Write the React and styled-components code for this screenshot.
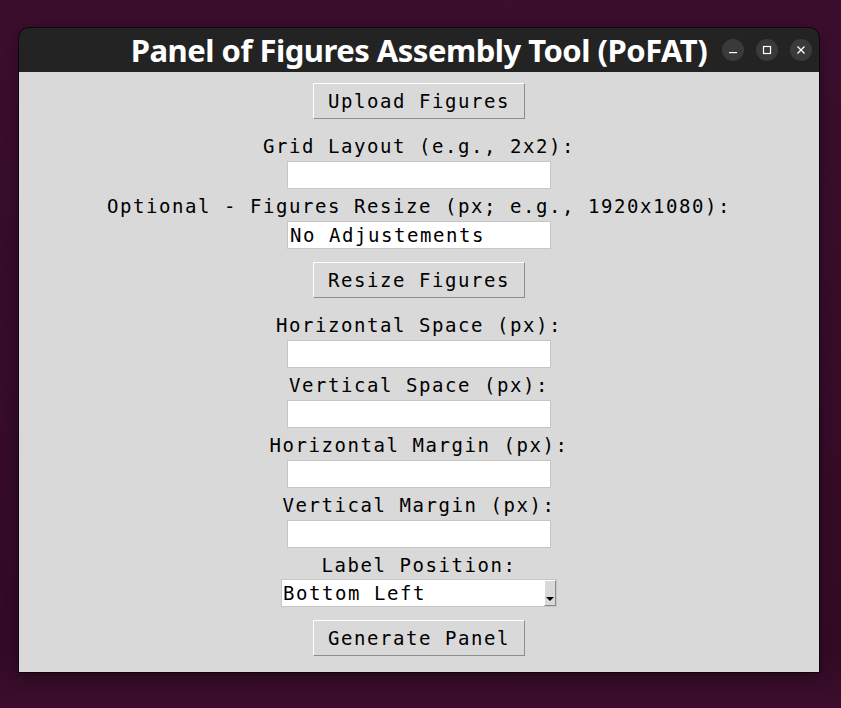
import styled, { createGlobalStyle } from "styled-components";

const GlobalStyle = createGlobalStyle`
  html, body {
    margin: 0;
    padding: 0;
    background: #390d2b;
  }
  * {
    box-sizing: border-box;
  }
`;

const Desktop = styled.div`
  width: 841px;
  height: 708px;
  padding: 28px 0 0 19px;
  background: linear-gradient(180deg, #3a0e2c 0%, #330a26 92%, #3a0e2c 100%);
`;

const Window = styled.div`
  width: 800px;
  border-radius: 10px 10px 0 0;
  overflow: hidden;
  box-shadow: 0 0 0 1px rgba(0, 0, 0, 0.6), 0 4px 14px rgba(0, 0, 0, 0.35);
`;

const TitleBar = styled.div`
  height: 44px;
  background: #232323;
  display: grid;
  grid-template-columns: 1fr auto 1fr;
  align-items: center;
`;

const Title = styled.div`
  grid-column: 2;
  color: #ffffff;
  font-family: "Noto Sans", "Open Sans", sans-serif;
  font-weight: 700;
  font-size: 31px;
  letter-spacing: -0.5px;
  line-height: 44px;
  white-space: nowrap;
`;

const Controls = styled.div`
  grid-column: 3;
  justify-self: end;
  display: flex;
  gap: 12px;
  padding-right: 7px;
`;

const Circle = styled.div`
  width: 22px;
  height: 22px;
  border-radius: 50%;
  background: #3a3a3a;
  display: flex;
  align-items: center;
  justify-content: center;
`;

const Content = styled.div`
  height: 600px;
  background: #d9d9d9;
  display: flex;
  flex-direction: column;
  align-items: center;
  font-family: "DejaVu Sans Mono", "Liberation Mono", monospace;
  font-size: 19px;
  letter-spacing: 1.56px;
  color: #000000;
`;

const Button = styled.div`
  width: 212px;
  height: 36px;
  margin-top: ${(p) => p.$top}px;
  margin-bottom: 10px;
  background: #d9d9d9;
  border-top: 1px solid #ffffff;
  border-left: 1px solid #ffffff;
  border-right: 1px solid #8c8c8c;
  border-bottom: 1px solid #8c8c8c;
  display: flex;
  align-items: center;
  justify-content: center;
  line-height: 1;
`;

const Label = styled.div`
  height: 32px;
  line-height: 34px;
  white-space: nowrap;
`;

const Entry = styled.div`
  width: 264px;
  height: 28px;
  background: #ffffff;
  border: 1px solid #c6c6c6;
  padding-left: 2px;
  display: flex;
  align-items: center;
  white-space: nowrap;
`;

const Combo = styled.div`
  width: 276px;
  height: 28px;
  margin-top: -1px;
  background: #ffffff;
  border: 1px solid #c6c6c6;
  display: flex;
`;

const ComboText = styled.div`
  flex: 1;
  padding-left: 1px;
  display: flex;
  align-items: center;
  white-space: nowrap;
`;

const ComboArrow = styled.div`
  width: 12px;
  background: #d9d9d9;
  border-top: 1px solid #ffffff;
  border-left: 1px solid #ffffff;
  border-right: 1px solid #8c8c8c;
  border-bottom: 1px solid #8c8c8c;
  display: flex;
  align-items: flex-end;
  justify-content: center;
  padding-bottom: 4px;
`;

const Triangle = styled.div`
  width: 0;
  height: 0;
  border-left: 4px solid transparent;
  border-right: 4px solid transparent;
  border-top: 4px solid #000000;
`;

function Field({ label, value }) {
  return (
    <>
      <Label>{label}</Label>
      <Entry>{value}</Entry>
    </>
  );
}

export default function App() {
  return (
    <>
      <GlobalStyle />
      <Desktop>
        <Window>
          <TitleBar>
            <Title>Panel of Figures Assembly Tool (PoFAT)</Title>
            <Controls>
              <Circle>
                <svg width="10" height="10" viewBox="0 0 10 10">
                  <rect x="1" y="7" width="8" height="1.2" fill="#fff" />
                </svg>
              </Circle>
              <Circle>
                <svg width="10" height="10" viewBox="0 0 10 10">
                  <rect x="1.5" y="1.5" width="7" height="7" fill="none" stroke="#fff" strokeWidth="1.2" />
                </svg>
              </Circle>
              <Circle>
                <svg width="10" height="10" viewBox="0 0 10 10">
                  <path d="M1.5 1.5 L8.5 8.5 M8.5 1.5 L1.5 8.5" stroke="#fff" strokeWidth="1.3" />
                </svg>
              </Circle>
            </Controls>
          </TitleBar>
          <Content>
            <Button $top={11}>Upload Figures</Button>
            <Field label="Grid Layout (e.g., 2x2):" value="" />
            <Field label="Optional - Figures Resize (px; e.g., 1920x1080):" value="No Adjustements" />
            <Button $top={13}>Resize Figures</Button>
            <Field label="Horizontal Space (px):" value="" />
            <Field label="Vertical Space (px):" value="" />
            <Field label="Horizontal Margin (px):" value="" />
            <Field label="Vertical Margin (px):" value="" />
            <Label>Label Position:</Label>
            <Combo>
              <ComboText>Bottom Left</ComboText>
              <ComboArrow>
                <Triangle />
              </ComboArrow>
            </Combo>
            <Button $top={13}>Generate Panel</Button>
          </Content>
        </Window>
      </Desktop>
    </>
  );
}
